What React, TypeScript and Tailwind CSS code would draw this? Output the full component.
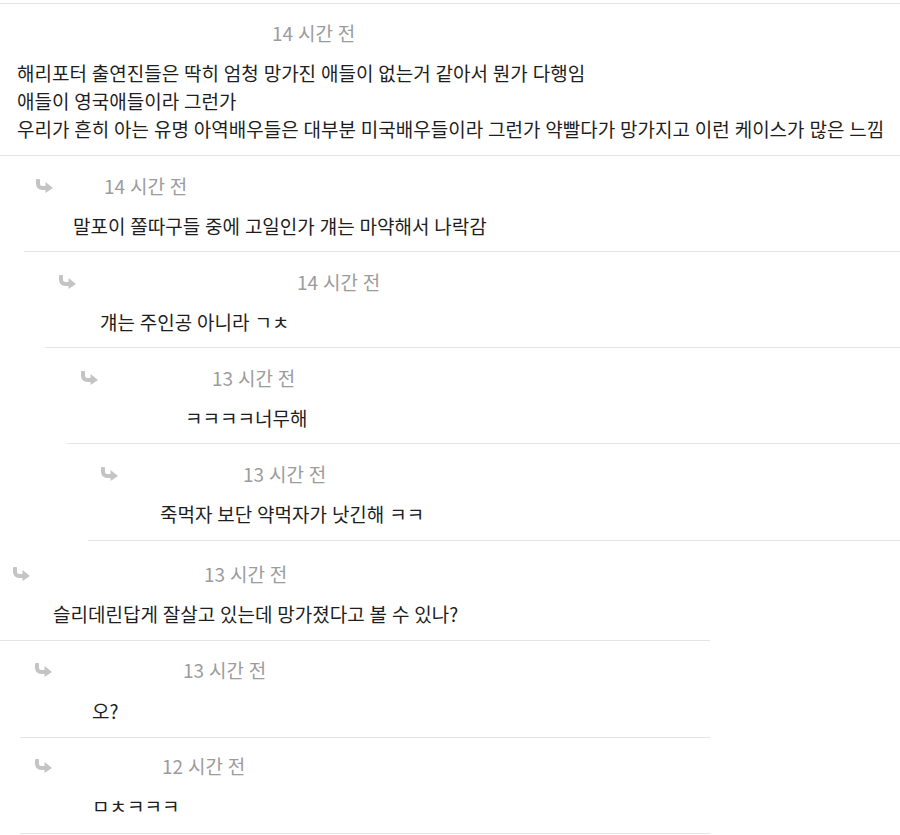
const comments = [
  {
    box: "ml-[24px] w-[876px]",
    head: "pt-[19px] pl-[11px]",
    gap: "w-[50px]",
    body: "pl-[49px] mt-[15px] pb-[11px]",
    time: "14 시간 전",
    text: ["말포이 쫄따구들 중에 고일인가 걔는 마약해서 나락감"],
  },
  {
    box: "ml-[45px] w-[855px]",
    head: "pt-[19px] pl-[13px]",
    gap: "w-[220px]",
    body: "pl-[55px] mt-[15px] pb-[11px]",
    time: "14 시간 전",
    text: ["걔는 주인공 아니라 ㄱㅊ"],
  },
  {
    box: "ml-[67px] w-[833px]",
    head: "pt-[19px] pl-[13px]",
    gap: "w-[113px]",
    body: "pl-[118px] mt-[15px] pb-[11px]",
    time: "13 시간 전",
    text: ["ㅋㅋㅋㅋ너무해"],
  },
  {
    box: "ml-[88px] w-[812px]",
    head: "pt-[19px] pl-[12px]",
    gap: "w-[124px]",
    body: "pl-[72px] mt-[15px] pb-[12px]",
    time: "13 시간 전",
    text: ["죽먹자 보단 약먹자가 낫긴해 ㅋㅋ"],
  },
  {
    box: "ml-0 w-[710px]",
    head: "pt-[22px] pl-[12px]",
    gap: "w-[173px]",
    body: "pl-[53px] mt-[15px] pb-[12px]",
    time: "13 시간 전",
    text: ["슬리데린답게 잘살고 있는데 망가졌다고 볼 수 있나?"],
  },
  {
    box: "ml-[20px] w-[690px]",
    head: "pt-[18px] pl-[14px]",
    gap: "w-[130px]",
    body: "pl-[72px] mt-[16px] pb-[12px]",
    time: "13 시간 전",
    text: ["오?"],
  },
  {
    box: "ml-[20px] w-[690px]",
    head: "pt-[17px] pl-[14px]",
    gap: "w-[109px]",
    body: "pl-[72px] mt-[15px] pb-[13px]",
    time: "12 시간 전",
    text: ["ㅁㅊㅋㅋㅋ"],
  },
];

const ReplyArrow = () => (
  <svg width="19" height="14" viewBox="0 0 19 14" className="shrink-0">
    <path d="M3 1.5 V4.5 Q3 9 7.5 9 H12" fill="none" stroke="#c4c4c4" strokeWidth="4" strokeLinecap="round" />
    <path d="M10.5 3 L18 9 L10.5 14 Z" fill="#c4c4c4" />
  </svg>
);

export default function App() {
  return (
    <div className="w-[900px] min-h-[835px] bg-white pt-[3px] font-['Malgun_Gothic','Noto_Sans_CJK_KR',sans-serif] text-[#1e1e1e] [word-spacing:0.6px]">
      <div className="border-t border-b border-[#e4e4e4]">
        <div className="pt-[18px] pl-[272px] text-[19px] leading-[22px] text-[#9c9c9c]">14 시간 전</div>
        <div className="mt-[15px] pl-[17px] pb-[12px] text-[19px] leading-[28px]">
          <p>해리포터 출연진들은 딱히 엄청 망가진 애들이 없는거 같아서 뭔가 다행임</p>
          <p>애들이 영국애들이라 그런가</p>
          <p>우리가 흔히 아는 유명 아역배우들은 대부분 미국배우들이라 그런가 약빨다가 망가지고 이런 케이스가 많은 느낌</p>
        </div>
      </div>
      {comments.map((c, i) => (
        <div key={i} className={`${c.box} border-b border-[#e4e4e4]`}>
          <div className={`${c.head} flex items-center`}>
            <ReplyArrow />
            <div className={c.gap} />
            <span className="text-[19px] leading-[22px] text-[#9c9c9c]">{c.time}</span>
          </div>
          <div className={`${c.body} text-[19px] leading-[28px]`}>
            {c.text.map((t, j) => (
              <p key={j}>{t}</p>
            ))}
          </div>
        </div>
      ))}
    </div>
  );
}
